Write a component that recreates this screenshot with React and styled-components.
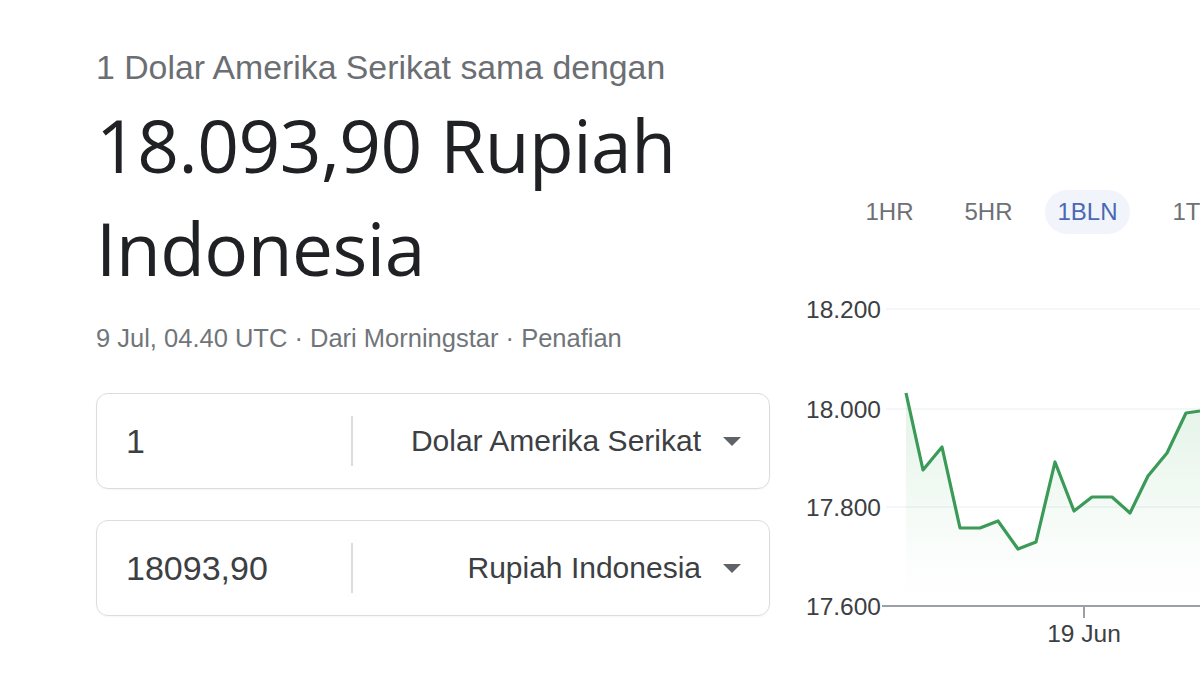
import React from 'react';
import styled, { createGlobalStyle } from 'styled-components';

const GlobalStyle = createGlobalStyle`
    html, body {
        margin: 0;
        padding: 0;
        background: #fff;
        overflow: hidden;
    }
    body {
        font-family: "Liberation Sans", Arial, sans-serif;
    }
`

const Page = styled.div`
    display: flex;
    width: 1200px;
    height: 675px;
    overflow: hidden;
    padding-left: 96px;
    box-sizing: border-box;
`

const Left = styled.div`
    display: flex;
    flex-direction: column;
    width: 674px;
    flex-shrink: 0;
`

const Caption = styled.div`
    margin-top: 47px;
    font-size: 33.8px;
    line-height: 40px;
    color: #6b6f73;
    white-space: nowrap;
`

const Result = styled.div`
    margin-top: 6px;
    font-family: "Open Sans", Roboto, sans-serif;
    font-size: 73px;
    line-height: 103px;
    color: #202124;
    letter-spacing: -0.5px;
    white-space: nowrap;
`

const Meta = styled.div`
    margin-top: 24px;
    font-size: 25.5px;
    line-height: 30px;
    color: #70757a;
    white-space: nowrap;
`

const Field = styled.div`
    display: flex;
    align-items: center;
    height: 96px;
    margin-top: ${p => p.$first ? '40px' : '31px'};
    border: 1px solid #dadce0;
    border-radius: 12px;
    box-sizing: border-box;
    box-shadow: 0 1px 2px rgba(0,0,0,.04);
`

const Amount = styled.div`
    width: 225px;
    padding-left: 29px;
    font-size: 34px;
    color: #3c4043;
`

const Divider = styled.div`
    width: 2px;
    height: 50px;
    background: #dadce0;
`

const Currency = styled.div`
    flex: 1;
    display: flex;
    align-items: center;
    justify-content: flex-end;
    gap: 22px;
    padding-right: 28px;
    font-size: 30px;
    color: #3c4043;
    white-space: nowrap;
`

const Caret = styled.span`
    width: 0;
    height: 0;
    border-left: 9px solid transparent;
    border-right: 9px solid transparent;
    border-top: 9px solid #5f6368;
`

const Right = styled.div`
    display: flex;
    flex-direction: column;
    margin-left: 30px;
    flex-shrink: 0;
    width: 400px;
`

const Tabs = styled.div`
    display: flex;
    gap: 14px;
    margin-top: 190px;
    padding-left: 47px;
`

const Tab = styled.div`
    display: flex;
    align-items: center;
    justify-content: center;
    width: 85px;
    height: 44px;
    flex-shrink: 0;
    border-radius: 22px;
    font-size: 24px;
    color: ${p => p.$active ? '#4a68b4' : '#6d7175'};
    background: ${p => p.$active ? '#f1f5fb' : 'transparent'};
`

const Chart = styled.svg`
    display: block;
    margin-top: 46px;
`

const points = [
    [906, 393], [923, 470], [942, 447], [960, 528], [980, 528], [998, 521],
    [1018, 549], [1036, 542], [1055, 462], [1074, 511], [1092, 497], [1112, 497],
    [1130, 513], [1148, 476], [1167, 453], [1186, 413], [1200, 411],
]

// chart coordinates are page coordinates shifted by the panel origin
const OX = 800
const OY = 280

function RateChart() {
    const pts = points.map(([x, y]) => [x - OX, y - OY])
    const line = pts.map((p, i) => (i ? 'L' : 'M') + p[0] + ' ' + p[1]).join(' ')
    const area = line + ` L${pts[pts.length - 1][0]} 326 L${pts[0][0]} 326 Z`
    const grid = [
        { label: '18.200', y: 29 },
        { label: '18.000', y: 129 },
        { label: '17.800', y: 227 },
    ]
    const font = 'Liberation Sans, Arial, sans-serif'
    return (
        <Chart width="400" height="380" viewBox="0 0 400 380">
            <defs>
                <linearGradient id="fill" x1="0" y1="0" x2="0" y2="1">
                    <stop offset="0" stopColor="#34a853" stopOpacity="0.14" />
                    <stop offset="0.75" stopColor="#34a853" stopOpacity="0.02" />
                    <stop offset="1" stopColor="#34a853" stopOpacity="0" />
                </linearGradient>
            </defs>
            {grid.map(g => (
                <g key={g.label}>
                    <line x1="86" x2="400" y1={g.y} y2={g.y} stroke="#f1f3f4" strokeWidth="1.5" />
                    <text x="6" y={g.y + 9} fontSize="24.5" fill="#3c4043" fontFamily={font}>{g.label}</text>
                </g>
            ))}
            <path d={area} fill="url(#fill)" />
            <path d={line} fill="none" stroke="#3b9a57" strokeWidth="3.2" strokeLinejoin="round" />
            <line x1="82" x2="400" y1="326" y2="326" stroke="#9aa0a6" strokeWidth="2" />
            <line x1="284" x2="284" y1="326" y2="338" stroke="#9aa0a6" strokeWidth="2" />
            <text x="6" y="335" fontSize="24.5" fill="#3c4043" fontFamily={font}>17.600</text>
            <text x="284" y="362" fontSize="24.5" fill="#3c4043" textAnchor="middle" fontFamily={font}>19 Jun</text>
        </Chart>
    )
}

function App() {
    return (
        <Page>
            <GlobalStyle />
            <Left>
                <Caption>1 Dolar Amerika Serikat sama dengan</Caption>
                <Result>18.093,90 Rupiah<br />Indonesia</Result>
                <Meta>9 Jul, 04.40 UTC · Dari Morningstar · Penafian</Meta>
                <Field $first>
                    <Amount>1</Amount>
                    <Divider />
                    <Currency>Dolar Amerika Serikat<Caret /></Currency>
                </Field>
                <Field>
                    <Amount>18093,90</Amount>
                    <Divider />
                    <Currency>Rupiah Indonesia<Caret /></Currency>
                </Field>
            </Left>
            <Right>
                <Tabs>
                    <Tab>1HR</Tab>
                    <Tab>5HR</Tab>
                    <Tab $active>1BLN</Tab>
                    <Tab>1T</Tab>
                </Tabs>
                <RateChart />
            </Right>
        </Page>
    )
}

export default App;
